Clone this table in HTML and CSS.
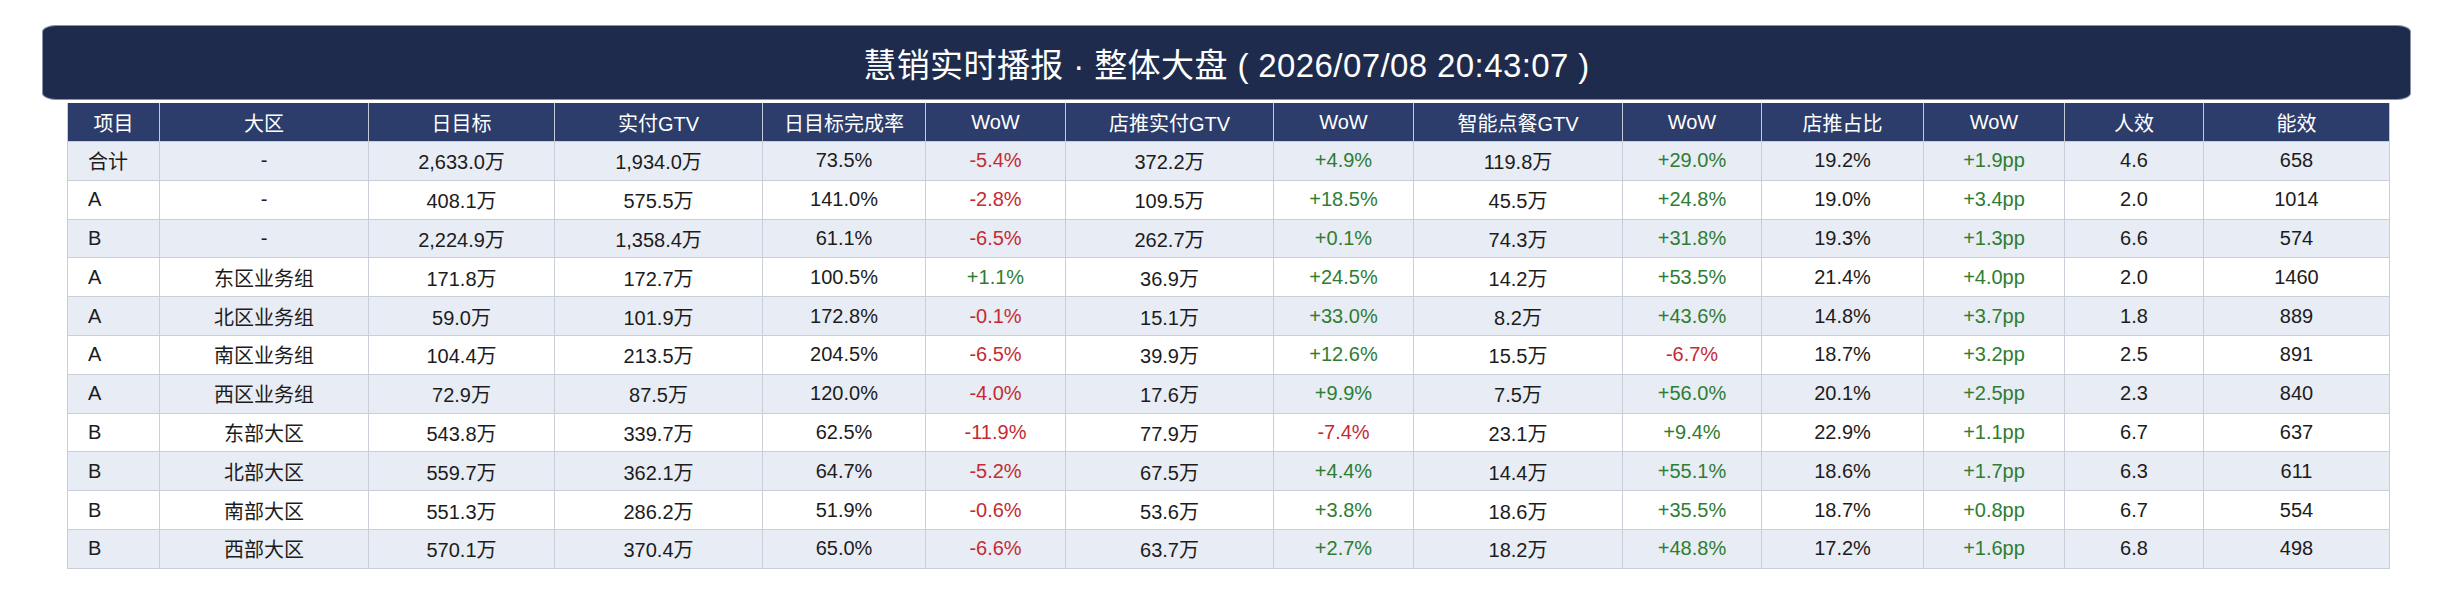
FILE: index.html
```html
<!DOCTYPE html>
<html lang="zh-CN">
<head>
<meta charset="utf-8">
<title>慧销实时播报</title>
<link rel="stylesheet" href="styles.css">
</head>
<body>
<div class="board">
  <div class="title-bar">慧销实时播报 · 整体大盘 ( 2026/07/08 20:43:07 )</div>
  <table class="report">
    <colgroup>
      <col style="width:92px"><col style="width:209px"><col style="width:186px"><col style="width:208px">
      <col style="width:163px"><col style="width:140px"><col style="width:208px"><col style="width:140px">
      <col style="width:209px"><col style="width:139px"><col style="width:162px"><col style="width:141px">
      <col style="width:139px"><col style="width:186px">
    </colgroup>
    <thead>
      <tr><th>项目</th><th>大区</th><th>日目标</th><th>实付GTV</th><th>日目标完成率</th><th>WoW</th><th>店推实付GTV</th><th>WoW</th><th>智能点餐GTV</th><th>WoW</th><th>店推占比</th><th>WoW</th><th>人效</th><th>能效</th></tr>
    </thead>
    <tbody>
      <tr><td class="item">合计</td><td>-</td><td>2,633.0万</td><td>1,934.0万</td><td>73.5%</td><td class="neg">-5.4%</td><td>372.2万</td><td class="pos">+4.9%</td><td>119.8万</td><td class="pos">+29.0%</td><td>19.2%</td><td class="pos">+1.9pp</td><td>4.6</td><td>658</td></tr>
      <tr><td class="item">A</td><td>-</td><td>408.1万</td><td>575.5万</td><td>141.0%</td><td class="neg">-2.8%</td><td>109.5万</td><td class="pos">+18.5%</td><td>45.5万</td><td class="pos">+24.8%</td><td>19.0%</td><td class="pos">+3.4pp</td><td>2.0</td><td>1014</td></tr>
      <tr><td class="item">B</td><td>-</td><td>2,224.9万</td><td>1,358.4万</td><td>61.1%</td><td class="neg">-6.5%</td><td>262.7万</td><td class="pos">+0.1%</td><td>74.3万</td><td class="pos">+31.8%</td><td>19.3%</td><td class="pos">+1.3pp</td><td>6.6</td><td>574</td></tr>
      <tr><td class="item">A</td><td>东区业务组</td><td>171.8万</td><td>172.7万</td><td>100.5%</td><td class="pos">+1.1%</td><td>36.9万</td><td class="pos">+24.5%</td><td>14.2万</td><td class="pos">+53.5%</td><td>21.4%</td><td class="pos">+4.0pp</td><td>2.0</td><td>1460</td></tr>
      <tr><td class="item">A</td><td>北区业务组</td><td>59.0万</td><td>101.9万</td><td>172.8%</td><td class="neg">-0.1%</td><td>15.1万</td><td class="pos">+33.0%</td><td>8.2万</td><td class="pos">+43.6%</td><td>14.8%</td><td class="pos">+3.7pp</td><td>1.8</td><td>889</td></tr>
      <tr><td class="item">A</td><td>南区业务组</td><td>104.4万</td><td>213.5万</td><td>204.5%</td><td class="neg">-6.5%</td><td>39.9万</td><td class="pos">+12.6%</td><td>15.5万</td><td class="neg">-6.7%</td><td>18.7%</td><td class="pos">+3.2pp</td><td>2.5</td><td>891</td></tr>
      <tr><td class="item">A</td><td>西区业务组</td><td>72.9万</td><td>87.5万</td><td>120.0%</td><td class="neg">-4.0%</td><td>17.6万</td><td class="pos">+9.9%</td><td>7.5万</td><td class="pos">+56.0%</td><td>20.1%</td><td class="pos">+2.5pp</td><td>2.3</td><td>840</td></tr>
      <tr><td class="item">B</td><td>东部大区</td><td>543.8万</td><td>339.7万</td><td>62.5%</td><td class="neg">-11.9%</td><td>77.9万</td><td class="neg">-7.4%</td><td>23.1万</td><td class="pos">+9.4%</td><td>22.9%</td><td class="pos">+1.1pp</td><td>6.7</td><td>637</td></tr>
      <tr><td class="item">B</td><td>北部大区</td><td>559.7万</td><td>362.1万</td><td>64.7%</td><td class="neg">-5.2%</td><td>67.5万</td><td class="pos">+4.4%</td><td>14.4万</td><td class="pos">+55.1%</td><td>18.6%</td><td class="pos">+1.7pp</td><td>6.3</td><td>611</td></tr>
      <tr><td class="item">B</td><td>南部大区</td><td>551.3万</td><td>286.2万</td><td>51.9%</td><td class="neg">-0.6%</td><td>53.6万</td><td class="pos">+3.8%</td><td>18.6万</td><td class="pos">+35.5%</td><td>18.7%</td><td class="pos">+0.8pp</td><td>6.7</td><td>554</td></tr>
      <tr><td class="item">B</td><td>西部大区</td><td>570.1万</td><td>370.4万</td><td>65.0%</td><td class="neg">-6.6%</td><td>63.7万</td><td class="pos">+2.7%</td><td>18.2万</td><td class="pos">+48.8%</td><td>17.2%</td><td class="pos">+1.6pp</td><td>6.8</td><td>498</td></tr>
    </tbody>
  </table>
</div>
</body>
</html>
```

FILE: styles.css
```css
html, body {
  margin: 0;
  padding: 0;
  background: #ffffff;
}

body {
  font-family: "Liberation Sans", "Noto Sans CJK SC", sans-serif;
  color: #1c1c1c;
}

.board {
  width: 2369px;
  margin-left: 42px;
  padding-top: 25px;
  display: flex;
  flex-direction: column;
}

.title-bar {
  box-sizing: border-box;
  height: 75px;
  background: #1e2b4d;
  border: 1px solid #8a93a8;
  border-radius: 14px / 7px;
  color: #ffffff;
  font-size: 33px;
  display: flex;
  align-items: center;
  justify-content: center;
  white-space: pre;
  letter-spacing: 0.4px;
}

.report {
  margin-top: 3px;
  margin-left: 25px;
  width: 2322px;
  table-layout: fixed;
  border-collapse: collapse;
  font-size: 20px;
}

.report th {
  height: 38px;
  background: #2c3d6b;
  color: #ffffff;
  font-weight: normal;
  text-align: center;
  border-left: 1px solid #c3c9d6;
  border-right: 1px solid #c3c9d6;
  padding: 0;
}

.report td {
  height: 37.8px;
  border: 1px solid #c9ced8;
  text-align: center;
  padding: 0;
}

.report tbody tr:nth-child(odd) td {
  background: #e8ecf4;
}

.report tbody tr:nth-child(even) td {
  background: #ffffff;
}

.report td.item {
  text-align: left;
  padding-left: 20px;
}

.report td.neg {
  color: #c42b33;
}

.report td.pos {
  color: #2e7d32;
}
```
